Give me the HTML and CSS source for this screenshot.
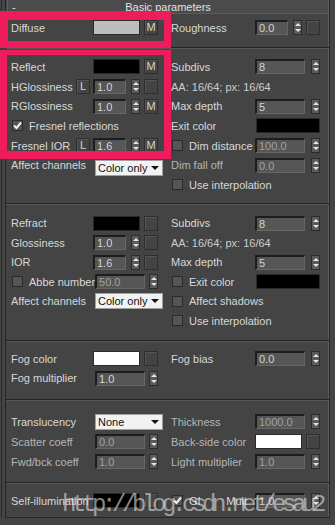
FILE: index.html
```html
<!DOCTYPE html>
<html lang="en">
<head>
  <meta charset="UTF-8">
  <title>Basic parameters</title>
  <link rel="stylesheet" href="styles.css">
</head>
<body>
  <div class="frame">
    <div class="panel">
      <div class="rollout-head"><span class="minus">-</span><span class="head-title">Basic parameters</span><span class="head-pad"></span></div>

      <div class="section s-diffuse">
        <div class="col">
          <div class="row"><span class="lbl">Diffuse</span><span class="swatch grey"></span><span class="btn">M</span></div>
        </div>
        <div class="col">
          <div class="row"><span class="lbl">Roughness</span><span class="num">0.0</span><span class="spin"></span><span class="btn"></span></div>
        </div>
      </div>

      <div class="section s-reflect">
        <div class="col">
          <div class="row"><span class="lbl">Reflect</span><span class="swatch black"></span><span class="btn">M</span></div>
          <div class="row"><span class="lbl">HGlossiness</span><span class="btn">L</span><span class="num">1.0</span><span class="spin"></span><span class="btn"></span></div>
          <div class="row"><span class="lbl">RGlossiness</span><span class="num">1.0</span><span class="spin"></span><span class="btn">M</span></div>
          <div class="row"><span class="check"><svg width="9" height="9" viewBox="0 0 9 9"><path d="M1 4.5 L3.5 7 L8 1.5" fill="none" stroke="#f0f0f0" stroke-width="2"/></svg></span><span class="lbl">Fresnel reflections</span></div>
          <div class="row"><span class="lbl">Fresnel IOR</span><span class="btn">L</span><span class="num">1.6</span><span class="spin"></span><span class="btn">M</span></div>
          <div class="row"><span class="lbl">Affect channels</span><span class="drop low">Color only</span></div>
        </div>
        <div class="col">
          <div class="row"><span class="lbl">Subdivs</span><span class="num wide">8</span><span class="spin"></span></div>
          <div class="row"><span class="lbl info">AA: 16/64; px: 16/64</span></div>
          <div class="row"><span class="lbl">Max depth</span><span class="num wide">5</span><span class="spin"></span></div>
          <div class="row"><span class="lbl">Exit color</span><span class="swatch wide black"></span></div>
          <div class="row"><span class="check"></span><span class="lbl">Dim distance</span><span class="num wide off">100.0</span><span class="spin"></span></div>
          <div class="row"><span class="lbl dim">Dim fall off</span><span class="num wide off">0.0</span><span class="spin"></span></div>
          <div class="row"><span class="check"></span><span class="lbl">Use interpolation</span></div>
        </div>
      </div>

      <div class="section s-refract">
        <div class="col">
          <div class="row"><span class="lbl">Refract</span><span class="swatch black"></span><span class="btn"></span></div>
          <div class="row"><span class="lbl">Glossiness</span><span class="num">1.0</span><span class="spin"></span><span class="btn"></span></div>
          <div class="row"><span class="lbl">IOR</span><span class="num">1.6</span><span class="spin"></span><span class="btn"></span></div>
          <div class="row"><span class="check"></span><span class="lbl">Abbe number</span><span class="num mid off">50.0</span><span class="spin"></span></div>
          <div class="row"><span class="lbl">Affect channels</span><span class="drop">Color only</span></div>
        </div>
        <div class="col">
          <div class="row"><span class="lbl">Subdivs</span><span class="num wide">8</span><span class="spin"></span></div>
          <div class="row"><span class="lbl info">AA: 16/64; px: 16/64</span></div>
          <div class="row"><span class="lbl">Max depth</span><span class="num wide">5</span><span class="spin"></span></div>
          <div class="row"><span class="check"></span><span class="lbl">Exit color</span><span class="swatch wide black"></span></div>
          <div class="row"><span class="check"></span><span class="lbl">Affect shadows</span></div>
          <div class="row"><span class="check"></span><span class="lbl">Use interpolation</span></div>
        </div>
      </div>

      <div class="section s-fog">
        <div class="col">
          <div class="row"><span class="lbl">Fog color</span><span class="swatch white"></span><span class="btn"></span></div>
          <div class="row"><span class="lbl">Fog multiplier</span><span class="num mid">1.0</span><span class="spin"></span></div>
        </div>
        <div class="col">
          <div class="row"><span class="lbl">Fog bias</span><span class="num wide">0.0</span><span class="spin"></span></div>
        </div>
      </div>

      <div class="section s-transl">
        <div class="col">
          <div class="row"><span class="lbl">Translucency</span><span class="drop">None</span></div>
          <div class="row"><span class="lbl dim">Scatter coeff</span><span class="num mid off">0.0</span><span class="spin"></span></div>
          <div class="row"><span class="lbl dim">Fwd/bck coeff</span><span class="num mid off">1.0</span><span class="spin"></span></div>
        </div>
        <div class="col">
          <div class="row"><span class="lbl dim">Thickness</span><span class="num wide off">1000.0</span><span class="spin"></span></div>
          <div class="row"><span class="lbl dim">Back-side color</span><span class="swatch white"></span><span class="btn"></span></div>
          <div class="row"><span class="lbl dim">Light multiplier</span><span class="num wide off">1.0</span><span class="spin"></span></div>
        </div>
      </div>

      <div class="section s-self">
        <div class="col">
          <div class="row"><span class="lbl">Self-illumination</span><span class="swatch black"></span><span class="btn"></span></div>
        </div>
        <div class="col">
          <div class="row"><span class="check"><svg width="9" height="9" viewBox="0 0 9 9"><path d="M1 4.5 L3.5 7 L8 1.5" fill="none" stroke="#f0f0f0" stroke-width="2"/></svg></span><span class="lbl">GI</span><span class="mult">Mult</span><span class="num wide">1.0</span><span class="spin"></span></div>
        </div>
      </div>
    </div>
  </div>

  <div class="mark mark-diffuse"></div>
  <div class="mark mark-reflect"></div>
  <div class="watermark">http://blog.csdn.net/esau2</div>
</body>
</html>
```

FILE: styles.css
```css
body {
  margin: 0;
  height: 525px;
  overflow: hidden;
  background-color: #444;
  font-family: 'Liberation Sans', Arial, sans-serif;
  font-size: 11px;
  color: #d8d8d8;
}

.frame {
  margin-left: 1px;
  border-left: 1px solid #2b2b2b;
  padding-left: 3px;
}

.panel {
  width: 325px;
  box-sizing: border-box;
  border-left: 1px solid #262626;
  border-right: 1px solid #262626;
  border-bottom: 1px solid #262626;
  box-shadow: inset -1px 0 0 #5b5b5b;
}

.rollout-head {
  display: flex;
  height: 14px;
  box-sizing: border-box;
  margin-left: 1px;
  padding-top: 2px;
  border: 1px solid #5d5d5d;
  border-top: none;
  background-color: #4b4b4b;
  line-height: 11px;
  color: #e2e2e2;
}
.minus {
  width: 14px;
  padding-left: 4px;
  box-sizing: border-box;
}
.head-title {
  flex: 1;
  text-align: center;
}
.head-pad {
  width: 14px;
}

/* sections */
.section {
  display: grid;
  grid-template-columns: 147px 149px;
  column-gap: 13px;
  padding-left: 5px;
}
.section + .section {
  border-top: 1px solid #232323;
  box-shadow: inset 0 1px 0 #575757;
}
.s-diffuse { padding-top: 4px; padding-bottom: 9.5px; }
.s-reflect { padding-top: 9px; padding-bottom: 8.1px; }
.s-reflect .row { height: 19.7px; }
.s-refract { padding-top: 9.5px; padding-bottom: 9.5px; }
.s-fog { padding-top: 8px; padding-bottom: 11px; }
.s-transl { padding-top: 12px; padding-bottom: 10px; }
.s-transl .row { height: 20px; }
.s-self { padding-top: 8px; padding-bottom: 6.5px; }

.row {
  display: flex;
  align-items: center;
  height: 19.5px;
  white-space: nowrap;
}
.lbl {
  flex: 1;
}
.dim {
  color: #b6b6b6;
}
.info {
  color: #cdcdcd;
}
.mult {
  margin-right: 8px;
}

/* controls */
.num {
  width: 33px;
  height: 15px;
  box-sizing: border-box;
  padding-left: 2px;
  background-color: #565656;
  border-style: solid;
  border-width: 2px 1px 1px 2px;
  border-color: #1d1d1d #676767 #676767 #1d1d1d;
  line-height: 12px;
  color: #d4d4d4;
}
.num.wide,
.num.mid {
  width: 50px;
}
.num.off {
  color: #a2a2a2;
}

.spin {
  position: relative;
  width: 9px;
  height: 15px;
  box-sizing: border-box;
  margin-left: 5px;
  border: 1px solid #2c2c2c;
  background-color: #5a5a5a;
}
.num.wide + .spin { margin-left: 6px; }
.num.mid + .spin { margin-left: 4px; }
.spin::before,
.spin::after {
  content: '';
  position: absolute;
  left: 0.5px;
  border-left: 3px solid transparent;
  border-right: 3px solid transparent;
}
.spin::before {
  top: 2px;
  border-bottom: 3px solid #e4e4e4;
}
.spin::after {
  bottom: 2px;
  border-top: 3px solid #e4e4e4;
}

.btn {
  width: 14px;
  height: 15px;
  box-sizing: border-box;
  border: 1px solid #2e2e2e;
  box-shadow: inset 1px 1px 0 #555;
  text-align: center;
  line-height: 13px;
  color: #d4d4d4;
}
.spin + .btn,
.swatch + .btn { margin-left: 4px; }
.btn + .num { margin-left: 3px; }

.swatch {
  width: 47px;
  height: 15px;
  box-sizing: border-box;
  border: 1px solid #2a2a2a;
}
.swatch.wide { width: 64px; }
.grey { background-color: #bebebe; }
.black { background-color: #000; }
.white { background-color: #fff; }

.check {
  display: flex;
  align-items: center;
  justify-content: center;
  width: 11px;
  height: 11px;
  box-sizing: border-box;
  margin: 0 6px 0 1px;
  border: 1px solid #2a2a2a;
  background-color: #555;
}
.check svg {
  display: block;
}

.drop {
  display: flex;
  align-items: center;
  justify-content: space-between;
  width: 68px;
  height: 16px;
  box-sizing: border-box;
  margin-right: -5px;
  padding: 0 3px 0 2px;
  background-color: #f2f2f2;
  border: 1px solid #a0a0a0;
  color: #111;
}
.drop::after {
  content: '';
  border-left: 4px solid transparent;
  border-right: 4px solid transparent;
  border-top: 4px solid #111;
}
.drop.low {
  margin-top: 6px;
}

/* highlight boxes drawn over the screenshot */
.mark {
  position: absolute;
  left: 0;
  width: 171px;
  box-sizing: border-box;
  border-style: solid;
  border-color: #ee1c5a;
}
.mark-diffuse {
  top: 11px;
  height: 37px;
  border-width: 9px 7px 7px 8px;
}
.mark-reflect {
  top: 50px;
  height: 109px;
  border-width: 5px 7px 8px 7px;
}

.watermark {
  position: absolute;
  left: 62px;
  top: 493px;
  font-family: 'Liberation Mono', monospace;
  font-size: 24px;
  line-height: 24px;
  letter-spacing: -4.4px;
  color: rgba(225, 225, 225, 0.6);
}
```
